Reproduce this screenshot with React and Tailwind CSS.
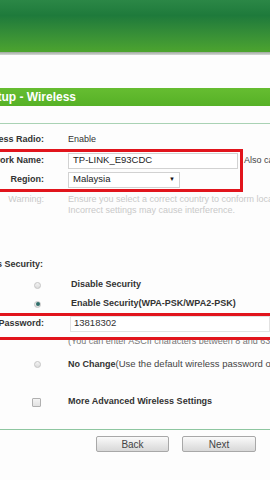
import React from 'react';

const Label = ({ children, bold = true }) => (
  <div className="w-[44px] shrink-0 flex justify-end overflow-hidden whitespace-nowrap">
    <span className={bold ? 'font-bold' : ''}>{children}</span>
  </div>
);

const Radio = ({ checked }) => (
  <div className="w-[68px] shrink-0 flex justify-start pl-[34px]">
    <div className="w-[7px] h-[7px] rounded-full border border-[#c4c4c4] bg-gradient-to-b from-[#f4f4f4] to-[#dcdcdc] flex items-center justify-center">
      {checked && <div className="w-[4px] h-[4px] rounded-full bg-[#2f6d6a]" />}
    </div>
  </div>
);

const App = () => {
  return (
    <div className="relative w-[270px] h-[480px] overflow-hidden bg-[#fdfdfd] text-[#333] text-[9px] font-['Liberation_Sans',Arial,sans-serif]">
      {/* header */}
      <div className="h-[52px] bg-gradient-to-b from-[#2b8746] via-[#1e7a3b] via-30% to-[#4ca42e]" />
      <div className="h-[3px] bg-gradient-to-b from-[#9ea79e] to-[#d6dad6]" />
      <div className="h-[33px]" />

      {/* title bar */}
      <div className="h-[18px] bg-gradient-to-b from-[#66bd31] to-[#56b126] flex items-center">
        <div className="w-[76px] shrink-0 flex justify-end overflow-hidden whitespace-nowrap">
          <span className="text-white font-bold text-[12px]">Quick Setup - Wireless</span>
        </div>
      </div>

      <div className="h-[17px]" />
      <div className="h-px bg-[#a9d2b4]" />

      {/* form */}
      <div className="flex flex-col mt-[8px]">
        <div className="flex items-center h-[16px]">
          <Label>Wireless Radio:</Label>
          <div className="pl-[24px]">Enable</div>
        </div>

        <div className="flex items-center h-[17px] mt-[4px]">
          <Label>Network Name:</Label>
          <div className="ml-[24px] shrink-0 w-[170px] h-[16px] border border-[#d2d2d2] bg-white flex items-center pl-[4px] text-[9.5px] text-[#222]">
            TP-LINK_E93CDC
          </div>
          <div className="ml-[6px] whitespace-nowrap text-[#444]">Also called the SSID</div>
        </div>

        <div className="flex items-center h-[17px] mt-[2px]">
          <Label>Region:</Label>
          <div className="ml-[24px] shrink-0 w-[112px] h-[16px] border border-[#d2d2d2] bg-white flex items-center justify-between pl-[4px] pr-[4px] text-[9.5px] text-[#222]">
            <span>Malaysia</span>
            <span className="text-[6px] text-[#111]">▼</span>
          </div>
        </div>

        <div className="flex mt-[6px] text-[#c9c9c9] leading-[11px]">
          <Label bold={false}>Warning:</Label>
          <div className="pl-[24px] whitespace-nowrap">
            <div>Ensure you select a correct country to conform local law.</div>
            <div>Incorrect settings may cause interference.</div>
          </div>
        </div>

        <div className="flex items-center h-[14px] mt-[42px]">
          <div className="w-[43px] shrink-0 flex justify-end overflow-hidden whitespace-nowrap">
            <span className="font-bold">Wireless Security:</span>
          </div>
        </div>

        <div className="flex items-center h-[14px] mt-[6px]">
          <Radio />
          <div className="pl-[3px] font-bold">Disable Security</div>
        </div>

        <div className="flex items-center h-[14px] mt-[5px]">
          <Radio checked />
          <div className="pl-[3px] font-bold whitespace-nowrap">Enable Security(WPA-PSK/WPA2-PSK)</div>
        </div>

        <div className="flex items-center h-[17px] mt-[4px]">
          <Label>Password:</Label>
          <div className="ml-[26px] flex-1 h-[16px] border border-[#e2e2e2] bg-white flex items-center pl-[3px] text-[9.5px] text-[#333]">
            13818302
          </div>
        </div>

        <div className="flex items-center h-[12px] mt-[4px] text-[#777] whitespace-nowrap">
          <div className="w-[68px] shrink-0" />
          <div>(You can enter ASCII characters between 8 and 63 characters.)</div>
        </div>

        <div className="flex items-center h-[14px] mt-[9px] whitespace-nowrap">
          <Radio />
          <div>
            <span className="font-bold">No Change</span>
            <span className="text-[#444] text-[9.5px]">(Use the default wireless password of the router)</span>
          </div>
        </div>

        <div className="flex items-center h-[14px] mt-[24px]">
          <div className="w-[68px] shrink-0 pl-[32px]">
            <div className="w-[9px] h-[9px] border border-[#b0b0b0] rounded-[1px] bg-gradient-to-b from-[#f4f4f4] to-[#e2e2e2]" />
          </div>
          <div className="font-bold whitespace-nowrap">More Advanced Wireless Settings</div>
        </div>

        <div className="h-px bg-[#8ec6a0] mt-[20px]" />

        <div className="flex gap-[13px] pl-[96px] mt-[6px]">
          <button className="w-[73px] h-[16px] border border-[#a8a8a8] rounded-[2px] bg-gradient-to-b from-[#fafafa] to-[#d8d8d8] text-[10px] text-[#444] flex items-center justify-center">
            Back
          </button>
          <button className="w-[74px] h-[16px] border border-[#a8a8a8] rounded-[2px] bg-gradient-to-b from-[#fafafa] to-[#d8d8d8] text-[10px] text-[#444] flex items-center justify-center">
            Next
          </button>
        </div>
      </div>

      {/* red annotation boxes */}
      <div className="absolute left-[-6px] top-[149px] w-[249px] h-[43px] border-[3px] border-[#e1141c]" />
      <div className="absolute left-[-6px] top-[313px] w-[290px] h-[27px] border-[3px] border-[#e1141c]" />
    </div>
  );
};

export default App;
